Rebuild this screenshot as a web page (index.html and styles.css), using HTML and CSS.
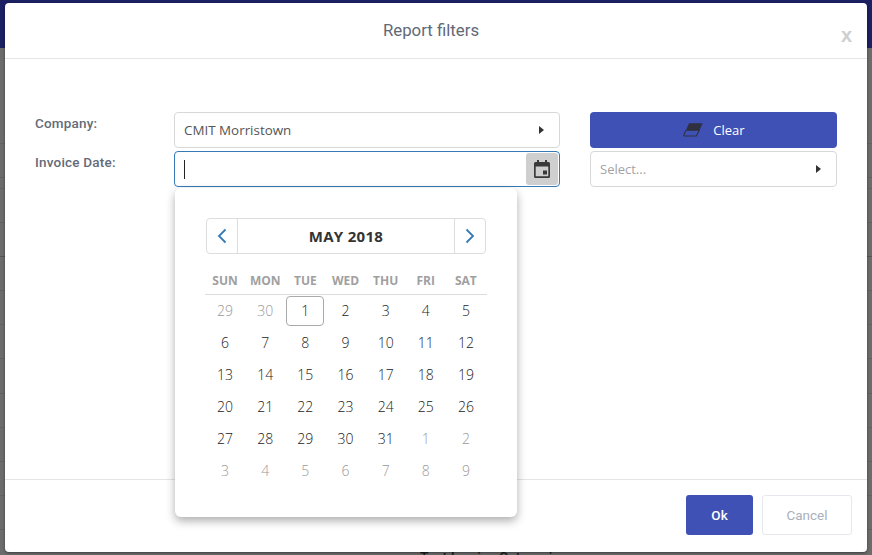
FILE: index.html
```html
<!DOCTYPE html>
<html lang="en">
<head>
<meta charset="utf-8">
<title>Report filters</title>
<link rel="stylesheet" href="styles.css">
</head>
<body>
<div class="page">
  <div class="page-top"></div>
  <div class="page-rows">
    <div class="page-row page-row-first"></div><div class="page-row page-row-second"></div><div class="page-row page-row-thin"></div>
    <div class="page-row"></div><div class="page-row page-row-dark"></div><div class="page-row"></div>
    <div class="page-row"></div><div class="page-row"></div><div class="page-row"></div>
    <div class="page-row"></div><div class="page-row"></div><div class="page-row"></div>
    <div class="page-row"></div><div class="page-row page-row-text">Test Invoice Categories</div>
  </div>
</div>
<div class="modal">
  <header class="modal-head">
    <h1 class="modal-title">Report filters</h1>
    <span class="modal-close">x</span>
  </header>
  <main class="modal-body">
    <div class="filters">
      <div class="labels">
        <label class="label">Company:</label>
        <label class="label">Invoice Date:</label>
      </div>
      <div class="fields">
        <div class="select"><span class="select-text">CMIT Morristown</span><span class="caret"></span></div>
        <div class="date-input">
          <span class="text-cursor"></span>
          <span class="date-btn">
            <svg width="16" height="18" viewBox="0 0 16 18"><path fill="#3a3a3a" d="M3 0h2v2h6V0h2v2h1.500A1.500 1.500 0 0 1 16 3.500v13a1.500 1.500 0 0 1-1.500 1.500h-13A1.500 1.500 0 0 1 0 16.500v-13A1.500 1.500 0 0 1 1.500 2H3zM1.700 6.500V16.300h12.600V6.500zM9 10.500h4v4H9z"/></svg>
          </span>
        </div>
      </div>
      <div class="side">
        <button class="btn-clear">
          <svg class="eraser" width="20" height="14" viewBox="0 0 20 14"><path fill="#2f3140" d="M6 0.300H19.700L16.500 7.200H3z"/><path fill="none" stroke="#2f3140" stroke-width="1.100" d="M3 7.200H16.300L13.300 13H1.100L0.900 11.800z"/></svg>
          <span>Clear</span>
        </button>
        <div class="select"><span class="select-placeholder">Select...</span><span class="caret"></span></div>
      </div>
    </div>
  </main>
  <footer class="modal-foot">
    <button class="btn-ok">Ok</button>
    <button class="btn-cancel">Cancel</button>
  </footer>
  <div class="calendar">
    <div class="cal-nav">
      <span class="cal-arrow">
        <svg width="10" height="16" viewBox="0 0 10 16"><path fill="none" stroke="#337ab7" stroke-width="1.800" d="M8.500 1.500L2 8l6.500 6.500"/></svg>
      </span>
      <span class="cal-month">MAY 2018</span>
      <span class="cal-arrow">
        <svg width="10" height="16" viewBox="0 0 10 16"><path fill="none" stroke="#337ab7" stroke-width="1.800" d="M1.500 1.500L8 8l-6.500 6.500"/></svg>
      </span>
    </div>
    <div class="cal-grid cal-weekdays">
      <span>SUN</span><span>MON</span><span>TUE</span><span>WED</span><span>THU</span><span>FRI</span><span>SAT</span>
    </div>
    <div class="cal-grid cal-days">
      <span class="muted">29</span><span class="muted">30</span><span class="today">1</span><span>2</span><span>3</span><span>4</span><span>5</span>
      <span>6</span><span>7</span><span>8</span><span>9</span><span>10</span><span>11</span><span>12</span>
      <span>13</span><span>14</span><span>15</span><span>16</span><span>17</span><span>18</span><span>19</span>
      <span>20</span><span>21</span><span>22</span><span>23</span><span>24</span><span>25</span><span>26</span>
      <span>27</span><span>28</span><span>29</span><span>30</span><span>31</span><span class="muted">1</span><span class="muted">2</span>
      <span class="muted">3</span><span class="muted">4</span><span class="muted">5</span><span class="muted">6</span><span class="muted">7</span><span class="muted">8</span><span class="muted">9</span>
    </div>
  </div>
</div>
</body>
</html>
```
FILE: styles.css
```css
* { box-sizing: border-box; }
html, body { margin: 0; height: 100%; overflow: hidden; }
body { font-family: Roboto, "Liberation Sans", sans-serif; background: #6c6c6c; }

.page { height: 555px; display: flex; flex-direction: column; }
.page-top { height: 48px; flex: none; background: #1b2162; }
.page-rows { flex: 1; min-height: 0; overflow: hidden; background: #6c6c6c; display: flex; flex-direction: column; }
.page-row { height: 34.100px; border-bottom: 1px solid #626262; flex: none; }
.page-row-first { height: 96px; }
.page-row-second { height: 34px; }
.page-row-thin { height: 11px; }
.page-row-dark { border-bottom-color: #555; }
.page-row-text { height: 40px; border: 0; padding: 13px 0 0 420px; font-size: 14px; font-weight: 500; line-height: 30px; color: #1d1d1d; }

.modal {
  position: absolute; left: 5px; top: 3px; width: 862px; height: 549px;
  background: #fff; border-radius: 4px;
  display: flex; flex-direction: column;
  box-shadow: 0 1px 3px rgba(0,0,0,.45);
}
.modal-head {
  height: 56px; flex: none; border-bottom: 1px solid #e5e5e5;
  display: flex; justify-content: center; position: relative; padding-right: 10px;
}
.modal-title { margin: 17px 0 0; font-size: 16.800px; line-height: 20px; font-weight: 400; color: #626976; }
.modal-close {
  position: absolute; right: 15px; top: 20px;
  font-family: "Liberation Sans", sans-serif; font-weight: 700; font-size: 20px; line-height: 24px; color: #cfcfcf;
}

.modal-body { flex: 1; padding: 53px 30px 0; }
.filters { display: flex; }
.labels { width: 139px; flex: none; display: flex; flex-direction: column; }
.label { height: 39px; padding-top: 3px; font-size: 13.500px; line-height: 17px; font-weight: 500; color: #646b78; letter-spacing: .2px; }
.fields { width: 386px; flex: none; display: flex; flex-direction: column; gap: 3px; }
.side { width: 247px; flex: none; margin-left: 30px; display: flex; flex-direction: column; gap: 3px; }

.select {
  height: 36px; border: 1px solid #d8d8d8; border-radius: 4px; background: #fff;
  display: flex; align-items: center; justify-content: space-between; padding: 0 15px 0 9px;
  font-family: "Open Sans", sans-serif; font-size: 13.400px;
}
.select-text { color: #555; }
.select-placeholder { color: #a3a3a3; font-size: 13px; }
.caret { width: 0; height: 0; border-left: 5px solid #333; border-top: 4px solid transparent; border-bottom: 4px solid transparent; }

.date-input {
  height: 36px; border: 1px solid #337ab7; border-radius: 4px; background: #fff;
  display: flex; align-items: center; justify-content: space-between; padding: 1px 1px 1px 9px;
}
.text-cursor { width: 1px; height: 19px; background: #222; }
.date-btn { width: 32px; height: 32px; background: #cfcfcf; border-radius: 3px; display: flex; align-items: center; justify-content: center; }

.btn-clear {
  height: 36px; border: 0; border-radius: 4px; background: #3f51b5; color: #fff;
  display: flex; align-items: center; justify-content: center; gap: 10px;
  font-family: "Open Sans", sans-serif; font-size: 13px; padding: 0;
}
.eraser { margin-left: 1px; }

.modal-foot {
  height: 73px; flex: none; border-top: 1px solid #e5e5e5;
  display: flex; justify-content: flex-end; align-items: flex-start; gap: 9px; padding: 15px 15px 0 0;
}
.btn-ok, .btn-cancel {
  height: 40px; border-radius: 3px; font-family: Roboto, sans-serif; font-size: 13.500px; font-weight: 500; padding: 0;
}
.btn-ok { width: 67px; border: 0; background: #3f51b5; color: #fff; }
.btn-cancel { width: 90px; border: 1px solid #e6e8ee; background: #fff; color: #a9b0ba; font-weight: 400; }

.calendar {
  position: absolute; left: 170px; top: 185px; width: 342px; height: 329px;
  background: #fff; border-radius: 6px;
  box-shadow: 0 4px 10px rgba(0,0,0,.32);
  padding: 30px 30px 0;
  font-family: "Open Sans", sans-serif;
}
.cal-nav {
  margin: 0 1px; height: 36px; border: 1px solid #ddd; border-radius: 4px;
  display: flex; align-items: stretch;
}
.cal-arrow { width: 30px; flex: none; display: flex; align-items: center; justify-content: center; }
.cal-month {
  flex: 1; border-left: 1px solid #ddd; border-right: 1px solid #ddd;
  display: flex; align-items: center; justify-content: center;
  font-size: 15px; font-weight: 700; color: #333; letter-spacing: .3px;
}
.cal-grid { display: grid; grid-template-columns: repeat(7, 1fr); text-align: center; }
.cal-weekdays {
  margin-top: 15px; height: 26px; border-bottom: 1px solid #ddd; padding: 1px 1px 0 0;
  font-size: 12px; font-weight: 700; color: #a0a0a0; line-height: 22px;
}
.cal-days { grid-auto-rows: 32px; font-size: 14px; font-weight: 300; line-height: 32px; color: #222; padding-right: 1px; }
.cal-days .muted { color: #999; }
.cal-days .today {
  border: 1px solid #aaa; border-radius: 4px; line-height: 28px; height: 30px; margin: 1px 1px;
}
```
